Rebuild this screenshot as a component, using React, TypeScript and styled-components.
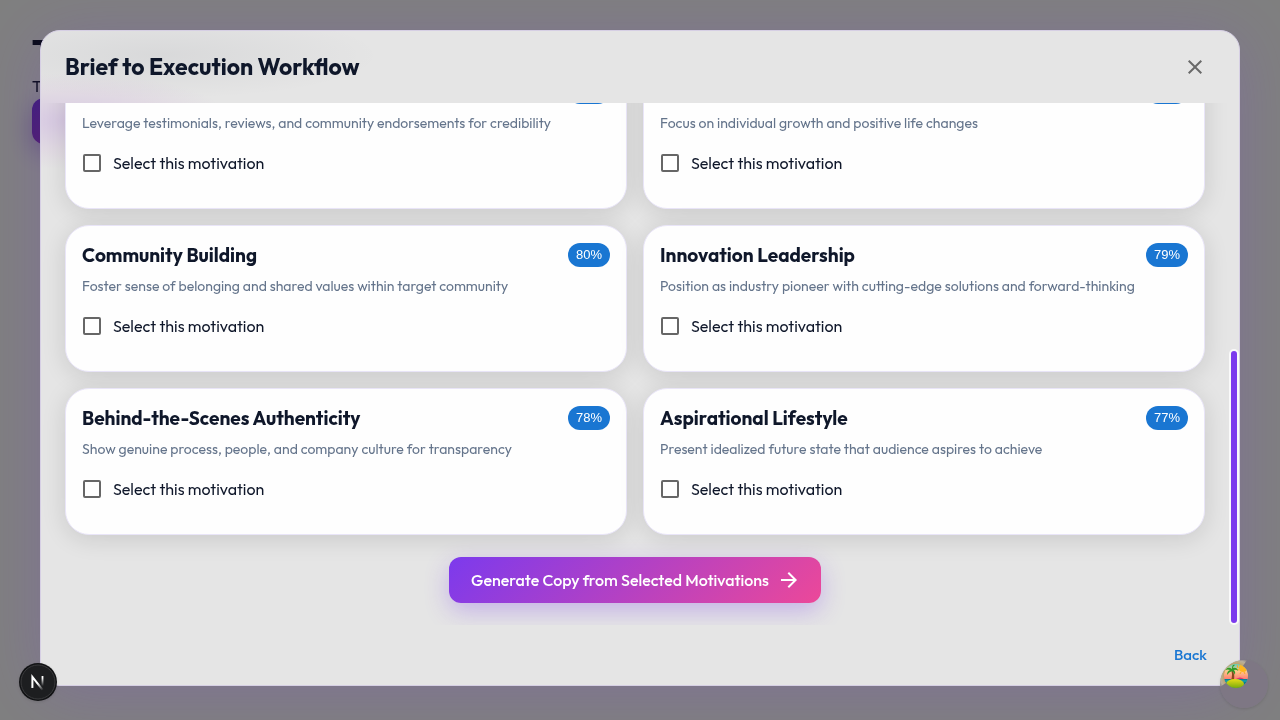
import React, { useLayoutEffect, useRef, useState } from "react";
import styled, { createGlobalStyle } from "styled-components";

const GlobalStyle = createGlobalStyle`
  *, *::before, *::after { box-sizing: border-box; }
  body { margin: 0; background: #fff; color: #0f172a; font-family: Outfit, Lato, "Liberation Sans", sans-serif; font-size: 16px; }
  h1, h2, h3, p { margin: 0; }
  button { font-family: inherit; border: 0; cursor: pointer; }
`;

const Page = styled.main`
  min-height: 100vh;
  padding: 32px;
  will-change: transform;
`;

const PageTitle = styled.h1`
  font-size: 34px;
  line-height: 40px;
  font-weight: 800;
`;

const PageText = styled.p`
  margin-top: 4px;
  font-size: 16px;
  line-height: 20px;
`;

const PageButton = styled.button`
  display: block;
  width: 152px;
  height: 46px;
  margin-top: 2px;
  border-radius: 12px;
  background: linear-gradient(135deg, #7c3aed 0%, #ec4899 100%);
  box-shadow: 0 8px 24px rgba(124, 58, 237, 0.4);
`;

const Overlay = styled.div`
  position: fixed;
  inset: 0;
  display: flex;
  padding: 30px 40px 34px;
  background: rgba(0, 0, 0, 0.5);
`;

const Dialog = styled.section`
  flex: 1;
  min-width: 0;
  display: flex;
  flex-direction: column;
  overflow: hidden;
  border: 1px solid #d6cfe4;
  border-radius: 20px;
  background:
    radial-gradient(ellipse 160px 48px at 30px 90px, rgba(170, 110, 220, 0.24), rgba(190, 120, 210, 0.1) 60%, transparent),
    radial-gradient(ellipse 220px 44px at 120px 24px, rgba(15, 23, 42, 0.06), transparent),
    #e5e5e5;
  box-shadow: 0 8px 64px rgba(124, 58, 237, 0.2);
`;

const DialogHeader = styled.header`
  display: flex;
  align-items: center;
  justify-content: space-between;
  height: 72px;
  flex: none;
  padding: 0 24px;
`;

const DialogTitle = styled.h2`
  font-size: 23px;
  line-height: 32px;
  font-weight: 700;
`;

const CloseButton = styled.button`
  display: flex;
  padding: 8px;
  background: none;
  color: rgba(0, 0, 0, 0.54);
`;

const ScrollArea = styled.div`
  position: relative;
  display: flex;
  flex: 1;
  min-height: 0;
`;

const DialogBody = styled.div`
  flex: 1;
  min-width: 0;
  overflow-y: auto;
  padding: 424px 34px 22px 24px;
  scrollbar-width: none;
  &::-webkit-scrollbar { display: none; }
`;

const ScrollThumb = styled.div`
  position: absolute;
  right: 0;
  width: 10px;
  border: 2px solid #fafafa;
  border-radius: 5px;
  background: #7c3aed;
`;

const CardGrid = styled.div`
  display: grid;
  grid-template-columns: repeat(2, minmax(0, 1fr));
  gap: 16px;
`;

const Card = styled.article`
  height: 147px;
  padding: 16px;
  border: 1px solid #e9e5f8;
  border-radius: 24px;
  background: #fefefe;
  box-shadow: 0 4px 24px rgba(0, 0, 0, 0.12);
`;

const CardHead = styled.div`
  display: flex;
  align-items: center;
  justify-content: space-between;
  height: 26px;
`;

const CardTitle = styled.h3`
  font-size: 19px;
  line-height: 26px;
  font-weight: 700;
`;

const Chip = styled.span`
  padding: 0 8px;
  border-radius: 12px;
  background: #1976d2;
  color: #fff;
  font-family: "Liberation Sans", sans-serif;
  font-size: 13px;
  line-height: 24px;
`;

const CardText = styled.p`
  margin-top: 8px;
  color: #64748b;
  font-size: 14px;
  line-height: 20px;
`;

const CheckLabel = styled.label`
  display: flex;
  align-items: center;
  gap: 12px;
  margin-top: 18px;
  padding-left: 1px;
  line-height: 24px;
`;

const CheckBox = styled.input`
  appearance: none;
  width: 18px;
  height: 18px;
  margin: 0;
  border: 2px solid #666;
  border-radius: 2px;
  &:checked { background: #1976d2; border-color: #1976d2; }
`;

const Actions = styled.div`
  display: flex;
  justify-content: center;
  margin-top: 22px;
`;

const PrimaryButton = styled.button`
  display: flex;
  align-items: center;
  gap: 8px;
  height: 46px;
  padding: 0 20px 0 22px;
  border-radius: 12px;
  background: linear-gradient(135deg, #7c3aed 0%, #ec4899 100%);
  box-shadow: 0 8px 24px rgba(124, 58, 237, 0.3);
  color: #fff;
  font-size: 16px;
  font-weight: 500;
`;

const DialogFooter = styled.footer`
  display: flex;
  justify-content: flex-end;
  align-items: center;
  flex: none;
  height: 60px;
  padding: 0 24px 2px;
`;

const TextButton = styled.button`
  padding: 6px 8px;
  background: none;
  color: #1976d2;
  font-size: 15px;
  font-weight: 500;
`;

const CornerButton = styled.button<{ $side: "left" | "right"; $size: number; $offset: number }>`
  position: fixed;
  ${(p) => p.$side}: ${(p) => p.$offset}px;
  bottom: ${(p) => p.$offset}px;
  width: ${(p) => p.$size}px;
  height: ${(p) => p.$size}px;
  padding: 0;
  border-radius: 50%;
  background: none;
  box-shadow: 0 1px 3px rgba(0, 0, 0, 0.12);

  svg { display: block; }
`;

const motivations = [
  ["Social Proof", "Leverage testimonials, reviews, and community endorsements for credibility", 82],
  ["Personal Transformation", "Focus on individual growth and positive life changes", 81],
  ["Community Building", "Foster sense of belonging and shared values within target community", 80],
  ["Innovation Leadership", "Position as industry pioneer with cutting-edge solutions and forward-thinking", 79],
  ["Behind-the-Scenes Authenticity", "Show genuine process, people, and company culture for transparency", 78],
  ["Aspirational Lifestyle", "Present idealized future state that audience aspires to achieve", 77],
] as const;

function IslandLogo() {
  return (
    <svg width="48" height="48" viewBox="0 0 48 48">
      <defs>
        <linearGradient id="sky" x1="0" y1="0" x2="0" y2="1">
          <stop offset="0" stopColor="#5fcfc0" />
          <stop offset="0.3" stopColor="#ffc98a" />
          <stop offset="0.6" stopColor="#ff8475" />
        </linearGradient>
        <linearGradient id="sand" x1="0" y1="0" x2="0" y2="1">
          <stop offset="0" stopColor="#e8dc18" />
          <stop offset="1" stopColor="#6ea60a" />
        </linearGradient>
        <radialGradient id="halo" gradientUnits="userSpaceOnUse" cx="16" cy="16" r="20">
          <stop offset="0.6" stopColor="#c9a862" stopOpacity="0.9" />
          <stop offset="0.8" stopColor="#cfc6a8" stopOpacity="0.7" />
          <stop offset="1" stopColor="#b5ab98" stopOpacity="0" />
        </radialGradient>
        <clipPath id="disc"><circle cx="16" cy="16" r="12" /></clipPath>
        <clipPath id="rim"><circle cx="24" cy="24" r="24" /></clipPath>
      </defs>
      <circle cx="24" cy="24" r="24" fill="#7e7784" />
      <g clipPath="url(#rim)">
        <path d="M0 27V0h27L16 16z" fill="url(#halo)" />
      </g>
      <g clipPath="url(#disc)">
        <rect x="4" y="4" width="24" height="24" fill="url(#sky)" />
        <circle cx="23" cy="8" r="4" fill="#ffb51c" />
        <path d="M17 5l1 3M16 9l3 1M20 14l1-2M25 14l-1-2" stroke="#ffa51c" strokeWidth="1" />
        <rect x="4" y="19" width="24" height="9" fill="#087f93" />
        <path d="M4 21h24" stroke="#20b5b5" strokeWidth="1" />
        <path d="M16 19q4-3 8 0z" fill="#e3316f" />
        <path d="M11 20q2-5 0-10l1.5-.5q2.500 5 1.500 10.500z" fill="#8a4a20" />
        <path d="M12 9q-4-3-7 1 3-1 5 0-3 1-3 5 2-3 5-4 2 1 3 4 1-3-1-5 2-1 4 1-1-4-5-3 0-2 2-3-3-1-3 4z" fill="#2f9a25" />
        <ellipse cx="15" cy="24" rx="9" ry="5" fill="url(#sand)" />
      </g>
    </svg>
  );
}

export default function App() {
  const body = useRef<HTMLDivElement>(null);
  const [thumb, setThumb] = useState({ top: 0, height: 0 });

  const measure = () => {
    const el = body.current;
    if (!el) return;
    const ratio = el.clientHeight / el.scrollHeight;
    setThumb({ top: el.scrollTop * ratio, height: el.clientHeight * ratio });
  };

  useLayoutEffect(() => {
    if (body.current) body.current.scrollTop = body.current.scrollHeight;
    measure();
    window.addEventListener("resize", measure);
    return () => window.removeEventListener("resize", measure);
  }, []);

  return (
    <>
      <GlobalStyle />
      <Page>
        <PageTitle>T</PageTitle>
        <PageText>T</PageText>
        <PageButton aria-label="Open workflow" />
      </Page>
      <Overlay>
        <Dialog role="dialog" aria-labelledby="dialog-title">
          <DialogHeader>
            <DialogTitle id="dialog-title">Brief to Execution Workflow</DialogTitle>
            <CloseButton aria-label="Close">
              <svg width="24" height="24" viewBox="0 0 24 24" fill="currentColor">
                <path d="M19 6.41 17.59 5 12 10.59 6.41 5 5 6.41 10.59 12 5 17.59 6.41 19 12 13.41 17.59 19 19 17.59 13.41 12z" />
              </svg>
            </CloseButton>
          </DialogHeader>
          <ScrollArea>
            <DialogBody ref={body} onScroll={measure}>
              <CardGrid>
                {motivations.map(([title, text, score]) => (
                  <Card key={title}>
                    <CardHead>
                      <CardTitle>{title}</CardTitle>
                      <Chip>{score}%</Chip>
                    </CardHead>
                    <CardText>{text}</CardText>
                    <CheckLabel>
                      <CheckBox type="checkbox" />
                      Select this motivation
                    </CheckLabel>
                  </Card>
                ))}
              </CardGrid>
              <Actions>
                <PrimaryButton>
                  Generate Copy from Selected Motivations
                  <svg width="24" height="24" viewBox="0 0 24 24" fill="currentColor">
                    <path d="m12 4-1.41 1.41L16.17 11H4v2h12.17l-5.58 5.59L12 20l8-8z" />
                  </svg>
                </PrimaryButton>
              </Actions>
            </DialogBody>
            <ScrollThumb style={{ top: thumb.top, height: thumb.height }} />
          </ScrollArea>
          <DialogFooter>
            <TextButton>Back</TextButton>
          </DialogFooter>
        </Dialog>
      </Overlay>
      <CornerButton $side="left" $size={38} $offset={19} aria-label="Developer tools">
        <svg width="38" height="38" viewBox="0 0 38 38">
          <defs>
            <linearGradient id="n-fade" gradientUnits="userSpaceOnUse" x1="0" y1="13" x2="0" y2="23">
              <stop offset="0.2" stopColor="#fff" />
              <stop offset="1" stopColor="#fff" stopOpacity="0" />
            </linearGradient>
            <linearGradient id="n-stroke" gradientUnits="userSpaceOnUse" x1="19" y1="20" x2="24" y2="27">
              <stop offset="0" stopColor="#fff" />
              <stop offset="1" stopColor="#fff" stopOpacity="0" />
            </linearGradient>
          </defs>
          <circle cx="19" cy="19" r="19" fill="#111214" />
          <circle cx="19" cy="19" r="17" fill="#1d1e20" stroke="#3b3b3d" />
          <path d="M13.400 25V13.800L24 27.400" fill="none" stroke="url(#n-stroke)" strokeWidth="2" />
          <rect x="22.600" y="13" width="1.800" height="10" fill="url(#n-fade)" />
        </svg>
      </CornerButton>
      <CornerButton $side="right" $size={48} $offset={12} aria-label="Open query devtools">
        <IslandLogo />
      </CornerButton>
    </>
  );
}
